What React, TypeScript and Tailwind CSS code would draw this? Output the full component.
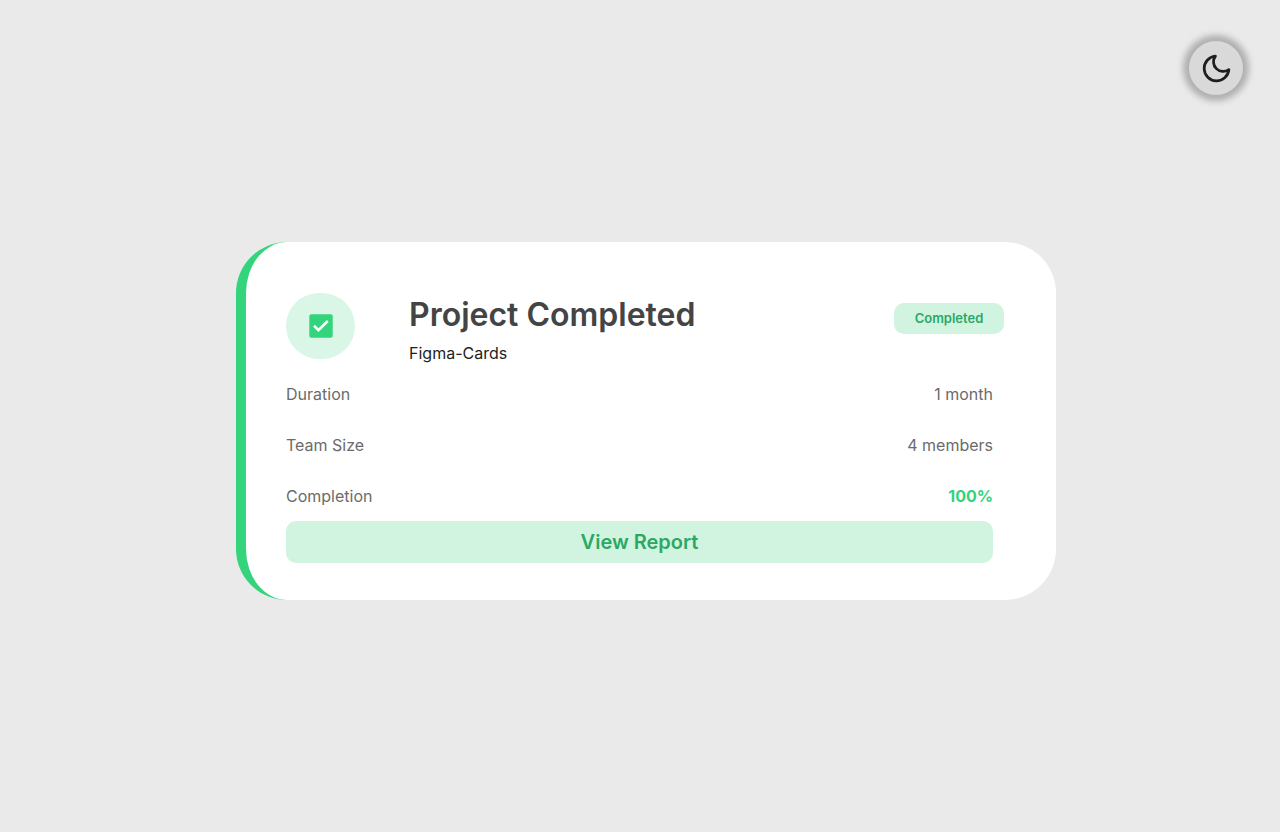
const details = [
  { label: "Duration", value: "1 month", tone: "text-[#6b6b6b]" },
  { label: "Team Size", value: "4 members", tone: "text-[#6b6b6b]" },
  { label: "Completion", value: "100%", tone: "font-bold text-[#33d47b]" },
];

function MoonIcon() {
  return (
    <svg className="size-[33px]" viewBox="0 0 24 24" fill="none" stroke="currentColor" strokeWidth="2" strokeLinecap="round" strokeLinejoin="round" aria-hidden="true">
      <path d="M21 12.79A9 9 0 1 1 11.21 3 7 7 0 0 0 21 12.79z" />
    </svg>
  );
}

function CheckIcon() {
  return (
    <svg className="size-6" viewBox="0 0 24 24" aria-hidden="true">
      <rect x="0.3" y="0.3" width="23.4" height="23.4" rx="2" fill="#33d47b" />
      <path d="M5 11.8 L9.5 16.2 L18.8 7" fill="none" stroke="#fff" strokeWidth="2.6" />
    </svg>
  );
}

export default function App() {
  return (
    <div className="flex min-h-screen flex-col bg-[#eaeaea] font-['Inter',sans-serif] text-base">
      <header className="flex justify-end px-9 pt-10">
        <button type="button" aria-label="Toggle dark mode" className="mt-px mr-px flex size-[54px] items-center justify-center rounded-full bg-[#d9d9d9] text-[#1e1e1e] shadow-[0_0_6px_6px_rgba(0,0,0,0.25)]">
          <MoonIcon />
        </button>
      </header>
      <main className="flex justify-center pt-[147px] pl-3">
        <article className="w-full max-w-[820px] rounded-[51px] border-l-10 border-[#33d47b] bg-white pt-[51px] pr-[52px] pb-[37px] pl-10">
          <div className="flex items-start">
            <div className="flex h-[66px] w-[69px] items-center justify-center rounded-full bg-[#d9f6e6]">
              <CheckIcon />
            </div>
            <div className="ml-[54px] flex-1">
              <h1 className="text-[32px] leading-[44px] font-semibold text-[#444444]">Project Completed</h1>
              <p className="mt-1 leading-6 text-[#1e1e1e]">Figma-Cards</p>
            </div>
            <span className="mt-[10px] flex h-[31px] w-[110px] items-center justify-center rounded-[10px] bg-[#d1f4e1] text-[13px] font-semibold text-[#2ba866]">Completed</span>
          </div>
          <div className="mr-[11px]">
            <dl className="mt-[17px] flex flex-col gap-[27px]">
              {details.map(({ label, value, tone }) => (
                <div key={label} className="flex justify-between leading-6">
                  <dt className="text-[#6b6b6b]">{label}</dt>
                  <dd className={tone}>{value}</dd>
                </div>
              ))}
            </dl>
            <button type="button" className="mt-[13px] flex h-[42px] w-full items-center justify-center rounded-[10px] bg-[#d1f4e1] text-xl font-semibold text-[#2ba866]">
              View Report
            </button>
          </div>
        </article>
      </main>
    </div>
  );
}
